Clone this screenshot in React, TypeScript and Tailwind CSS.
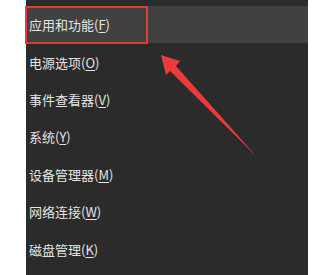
import React from 'react';

const items: { label: string; key: string }[] = [
  { label: '应用和功能', key: 'F' },
  { label: '电源选项', key: 'O' },
  { label: '事件查看器', key: 'V' },
  { label: '系统', key: 'Y' },
  { label: '设备管理器', key: 'M' },
  { label: '网络连接', key: 'W' },
  { label: '磁盘管理', key: 'K' },
];

export default function App() {
  return (
    <div className="relative flex h-[275px] w-[324px] overflow-hidden bg-white">
      <div className="w-[26px] shrink-0 bg-white" />

      {/* Win+X menu */}
      <div className="relative flex w-[282px] shrink-0 flex-col bg-[#2b2b2b] pt-[6px]">
        {items.map((item, i) => (
          <div
            key={item.key}
            className={`flex h-[37.4px] items-center pl-[3px] text-[13px] leading-none text-[#e4e4e4] ${
              i === 0 ? 'bg-[#414141]' : ''
            }`}
            style={{ fontFamily: '"Noto Sans CJK SC", "Noto Sans", sans-serif' }}
          >
            {item.label}(<span className="underline underline-offset-2">{item.key}</span>)
          </div>
        ))}

        {/* red highlight box */}
        <div className="absolute left-[-1px] top-[6px] h-[38px] w-[123px] border-2 border-[#e53935]" />
      </div>

      <div className="flex-1 bg-white" />

      {/* red arrow */}
      <svg className="absolute left-0 top-0" width="324" height="275" viewBox="0 0 324 275">
        <polygon
          points="161,55 180,61 176,66 256,156 170,71 166,75"
          fill="#ec3b3b"
        />
      </svg>
    </div>
  );
}
